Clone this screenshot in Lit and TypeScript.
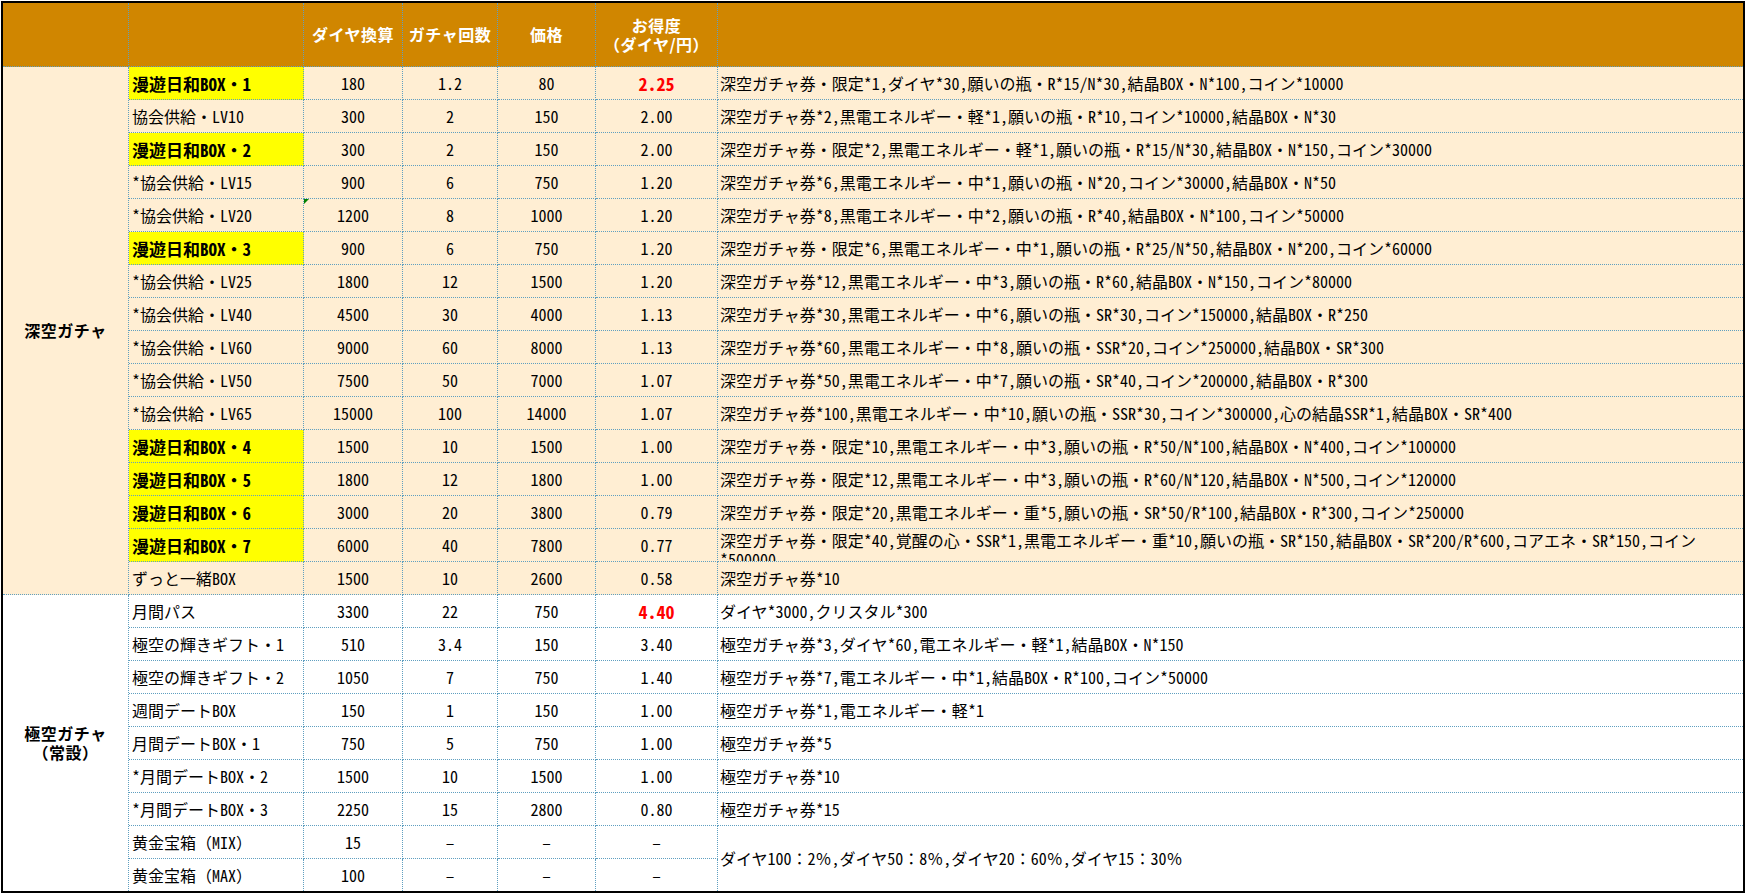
import { LitElement, html, css } from "lit";
import { customElement } from "lit/decorators.js";

type Row = { n: string; hi?: boolean; c: string; d: string; e: string; f: string; red?: boolean; g: string; wrap?: boolean };

const deep: Row[] = [
  { n: "漫遊日和BOX・1", hi: true, c: "180", d: "1.2", e: "80", f: "2.25", red: true, g: "深空ガチャ券・限定*1,ダイヤ*30,願いの瓶・R*15/N*30,結晶BOX・N*100,コイン*10000" },
  { n: "協会供給・LV10", c: "300", d: "2", e: "150", f: "2.00", g: "深空ガチャ券*2,黒電エネルギー・軽*1,願いの瓶・R*10,コイン*10000,結晶BOX・N*30" },
  { n: "漫遊日和BOX・2", hi: true, c: "300", d: "2", e: "150", f: "2.00", g: "深空ガチャ券・限定*2,黒電エネルギー・軽*1,願いの瓶・R*15/N*30,結晶BOX・N*150,コイン*30000" },
  { n: "*協会供給・LV15", c: "900", d: "6", e: "750", f: "1.20", g: "深空ガチャ券*6,黒電エネルギー・中*1,願いの瓶・N*20,コイン*30000,結晶BOX・N*50" },
  { n: "*協会供給・LV20", c: "1200", d: "8", e: "1000", f: "1.20", g: "深空ガチャ券*8,黒電エネルギー・中*2,願いの瓶・R*40,結晶BOX・N*100,コイン*50000" },
  { n: "漫遊日和BOX・3", hi: true, c: "900", d: "6", e: "750", f: "1.20", g: "深空ガチャ券・限定*6,黒電エネルギー・中*1,願いの瓶・R*25/N*50,結晶BOX・N*200,コイン*60000" },
  { n: "*協会供給・LV25", c: "1800", d: "12", e: "1500", f: "1.20", g: "深空ガチャ券*12,黒電エネルギー・中*3,願いの瓶・R*60,結晶BOX・N*150,コイン*80000" },
  { n: "*協会供給・LV40", c: "4500", d: "30", e: "4000", f: "1.13", g: "深空ガチャ券*30,黒電エネルギー・中*6,願いの瓶・SR*30,コイン*150000,結晶BOX・R*250" },
  { n: "*協会供給・LV60", c: "9000", d: "60", e: "8000", f: "1.13", g: "深空ガチャ券*60,黒電エネルギー・中*8,願いの瓶・SSR*20,コイン*250000,結晶BOX・SR*300" },
  { n: "*協会供給・LV50", c: "7500", d: "50", e: "7000", f: "1.07", g: "深空ガチャ券*50,黒電エネルギー・中*7,願いの瓶・SR*40,コイン*200000,結晶BOX・R*300" },
  { n: "*協会供給・LV65", c: "15000", d: "100", e: "14000", f: "1.07", g: "深空ガチャ券*100,黒電エネルギー・中*10,願いの瓶・SSR*30,コイン*300000,心の結晶SSR*1,結晶BOX・SR*400" },
  { n: "漫遊日和BOX・4", hi: true, c: "1500", d: "10", e: "1500", f: "1.00", g: "深空ガチャ券・限定*10,黒電エネルギー・中*3,願いの瓶・R*50/N*100,結晶BOX・N*400,コイン*100000" },
  { n: "漫遊日和BOX・5", hi: true, c: "1800", d: "12", e: "1800", f: "1.00", g: "深空ガチャ券・限定*12,黒電エネルギー・中*3,願いの瓶・R*60/N*120,結晶BOX・N*500,コイン*120000" },
  { n: "漫遊日和BOX・6", hi: true, c: "3000", d: "20", e: "3800", f: "0.79", g: "深空ガチャ券・限定*20,黒電エネルギー・重*5,願いの瓶・SR*50/R*100,結晶BOX・R*300,コイン*250000" },
  { n: "漫遊日和BOX・7", hi: true, c: "6000", d: "40", e: "7800", f: "0.77", wrap: true, g: "深空ガチャ券・限定*40,覚醒の心・SSR*1,黒電エネルギー・重*10,願いの瓶・SR*150,結晶BOX・SR*200/R*600,コアエネ・SR*150,コイン*500000" },
  { n: "ずっと一緒BOX", c: "1500", d: "10", e: "2600", f: "0.58", g: "深空ガチャ券*10" },
];

const ever: Row[] = [
  { n: "月間パス", c: "3300", d: "22", e: "750", f: "4.40", red: true, g: "ダイヤ*3000,クリスタル*300" },
  { n: "極空の輝きギフト・1", c: "510", d: "3.4", e: "150", f: "3.40", g: "極空ガチャ券*3,ダイヤ*60,電エネルギー・軽*1,結晶BOX・N*150" },
  { n: "極空の輝きギフト・2", c: "1050", d: "7", e: "750", f: "1.40", g: "極空ガチャ券*7,電エネルギー・中*1,結晶BOX・R*100,コイン*50000" },
  { n: "週間デートBOX", c: "150", d: "1", e: "150", f: "1.00", g: "極空ガチャ券*1,電エネルギー・軽*1" },
  { n: "月間デートBOX・1", c: "750", d: "5", e: "750", f: "1.00", g: "極空ガチャ券*5" },
  { n: "*月間デートBOX・2", c: "1500", d: "10", e: "1500", f: "1.00", g: "極空ガチャ券*10" },
  { n: "*月間デートBOX・3", c: "2250", d: "15", e: "2800", f: "0.80", g: "極空ガチャ券*15" },
  { n: "黄金宝箱（MIX）", c: "15", d: "–", e: "–", f: "–", g: "ダイヤ100：2％,ダイヤ50：8％,ダイヤ20：60％,ダイヤ15：30％" },
  { n: "黄金宝箱（MAX）", c: "100", d: "–", e: "–", f: "–", g: "" },
];

/** Wraps half-width runs so they get the half-width glyph form. */
const t = (s: string) =>
  s.split(/([\x20-\x7e–]+)/).map((p, i) => (i % 2 ? html`<span class="l">${p}</span>` : p));

@customElement("app-root")
export class AppRoot extends LitElement {
  static styles = css`
    :host {
      display: block;
      width: 1746px;
      height: 894px;
      padding: 1px;
      box-sizing: border-box;
      background: #fff;
      font-family: "Noto Sans CJK JP", "Liberation Sans", sans-serif;
      font-size: 16px;
      color: #000;
    }
    table {
      table-layout: fixed;
      border-collapse: separate;
      border-spacing: 0;
      width: 1744px;
      border: 2px solid #000;
      box-sizing: border-box;
    }
    td, th {
      box-sizing: border-box;
      height: 33px;
      padding: 0;
      border-right: 1px dotted #5f9fc0;
      border-bottom: 1px dotted #5f9fc0;
      text-align: center;
      vertical-align: middle;
      font-weight: 400;
      line-height: 19px;
      overflow: hidden;
      white-space: nowrap;
    }
    .l { font-feature-settings: "hwid"; }
    thead th {
      height: 64px;
      background: #d08600;
      color: #fff;
      font-weight: 700;
      font-size: 16px;
      letter-spacing: 0.5px;
    }
    thead th.wa { width: 126px; }
    thead th.wb { width: 175px; }
    thead th.wc { width: 99px; }
    thead th.wd { width: 95px; }
    thead th.we { width: 98px; }
    thead th.wf { width: 122px; }
    thead th.g { border-right: none; }
    .deep td { background: #ffeed3; }
    .ever td { background: #fff; }
    td.sec { font-weight: 700; letter-spacing: 0.5px; }
    td.name { text-align: left; padding-left: 3px; }
    .deep td.name.hi { background: #ffff00; font-weight: 700; font-size: 17px; }
    td.gift {
      text-align: left;
      padding-left: 2px;
      border-right: none;
    }
    .clip {
      height: 32px;
      overflow: hidden;
      white-space: normal;
      padding-top: 2px;
      box-sizing: border-box;
    }
    td.red { color: #ff0000; font-weight: 700; font-size: 18px; }
    tr.last td { border-bottom: none; height: 32px; }
    td.merged { border-bottom: none; }
    .tri {
      position: absolute;
      left: 0;
      top: 0;
      width: 5px;
      height: 5px;
      background: #008000;
      clip-path: polygon(0 0, 100% 0, 0 100%);
    }
    td.num { position: relative; }
  `;

  private row(r: Row, section: unknown, idx: number, cls: string, note = -1, mergedGift = false) {
    const merged = r.n.includes("MIX");
    return html`<tr class=${cls}>
      ${section}
      <td class="name ${r.hi ? "hi" : ""}">${t(r.n)}</td>
      <td class="num">${idx === note ? html`<span class="tri"></span>` : ""}${t(r.c)}</td>
      <td>${t(r.d)}</td>
      <td>${t(r.e)}</td>
      <td class=${r.red ? "red" : ""}>${t(r.f)}</td>
      ${mergedGift
        ? ""
        : html`<td class="gift ${merged ? "merged" : ""}" rowspan=${merged ? 2 : 1}>
            ${r.wrap ? html`<div class="clip">${t(r.g)}</div>` : t(r.g)}
          </td>`}
    </tr>`;
  }

  render() {
    return html`<table>
      <thead>
        <tr>
          <th class="wa"></th><th class="wb"></th>
          <th class="wc">ダイヤ換算</th><th class="wd">ガチャ回数</th><th class="we">価格</th>
          <th class="wf">お得度<br />（ダイヤ/円）</th>
          <th class="g"></th>
        </tr>
      </thead>
      <tbody>
        ${deep.map((r, i) =>
          this.row(r, i === 0 ? html`<td class="sec" rowspan=${deep.length}>深空ガチャ</td>` : "", i, "deep", 4)
        )}
        ${ever.map((r, i) =>
          this.row(
            r,
            i === 0 ? html`<td class="sec merged" rowspan=${ever.length}>極空ガチャ<br />（常設）</td>` : "",
            i,
            i === ever.length - 1 ? "ever last" : "ever",
            -1,
            i === ever.length - 1
          )
        )}
      </tbody>
    </table>`;
  }
}
